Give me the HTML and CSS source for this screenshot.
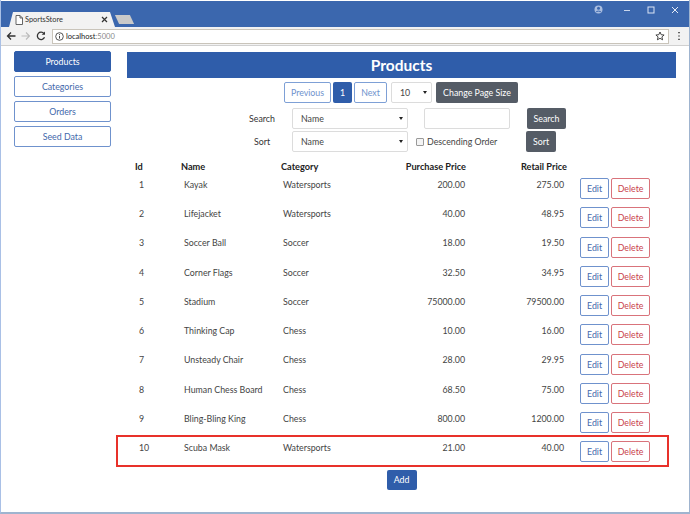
FILE: index.html
```html
<!DOCTYPE html>
<html lang="en">
<head>
    <meta charset="UTF-8">
    <meta name="viewport" content="width=device-width, initial-scale=1.0">
    <title>SportsStore</title>
    <link rel="stylesheet" href="styles.css">
</head>
<body>
    <div class="window">
        <div class="titlebar">
            <div class="tab">
                <svg class="tab-icon" width="8" height="10" viewBox="0 0 8 10"><path d="M1 .5h4l2.5 2.5v6.5H1z M5 .5V3h2.5" fill="#fff" stroke="#555" stroke-width=".9"/></svg>
                <span class="tab-title">SportsStore</span>
                <svg class="tab-close" width="7" height="7" viewBox="0 0 7 7"><path d="M1 1l5 5M6 1L1 6" stroke="#333" stroke-width="1.2"/></svg>
            </div>
            <div class="new-tab"></div>
            <div class="window-controls">
                <svg class="account" width="9" height="9" viewBox="0 0 9 9"><circle cx="4.5" cy="4.5" r="4" fill="#a9bde0"/><circle cx="4.5" cy="3.3" r="1.5" fill="#3b67ae"/><path d="M1.8 7.2c.7-1.4 4.7-1.4 5.4 0" stroke="#3b67ae" fill="none"/></svg>
                <svg width="8" height="8" viewBox="0 0 8 8"><path d="M1 4.5h6" stroke="#c9d6ec" stroke-width="1"/></svg>
                <svg width="8" height="8" viewBox="0 0 8 8"><rect x="1" y="1" width="6" height="6" fill="none" stroke="#dbe4f3" stroke-width="1"/></svg>
                <svg width="8" height="8" viewBox="0 0 8 8"><path d="M1 1l6 6M7 1L1 7" stroke="#e6ecf6" stroke-width="1"/></svg>
            </div>
        </div>
        <div class="toolbar">
            <svg width="10" height="10" viewBox="0 0 10 10"><path d="M9.5 5H1.5M5 1.5L1.5 5 5 8.5" fill="none" stroke="#333" stroke-width="1.3"/></svg>
            <svg width="10" height="10" viewBox="0 0 10 10"><path d="M.5 5h8M5 1.5L8.5 5 5 8.5" fill="none" stroke="#bbb" stroke-width="1.1"/></svg>
            <svg width="10" height="10" viewBox="0 0 10 10"><path d="M8.5 6.2A3.7 3.7 0 1 1 8 2.6" fill="none" stroke="#333" stroke-width="1.3"/><path d="M9 .5v3.3H5.7z" fill="#333"/></svg>
            <div class="address">
                <svg width="9" height="9" viewBox="0 0 9 9"><circle cx="4.5" cy="4.5" r="3.8" fill="none" stroke="#444" stroke-width=".9"/><path d="M4.5 4v2.6M4.5 2.2v1" stroke="#444" stroke-width="1"/></svg>
                <span class="host">localhost</span><span class="port">:5000</span>
                <svg class="star" width="10" height="10" viewBox="0 0 10 10"><path d="M5 1l1.2 2.7 2.9.3-2.2 1.9.7 2.9L5 7.3 2.4 8.8l.7-2.9L.9 4l2.9-.3z" fill="none" stroke="#333" stroke-width=".9"/></svg>
            </div>
            <svg class="menu" width="4" height="10" viewBox="0 0 4 10"><path d="M2 1v1.2M2 4.4v1.2M2 7.8V9" stroke="#333" stroke-width="1.5"/></svg>
        </div>

        <div class="page">
            <div class="sidebar">
                <a class="nav-btn active">Products</a>
                <a class="nav-btn">Categories</a>
                <a class="nav-btn">Orders</a>
                <a class="nav-btn">Seed Data</a>
            </div>
            <div class="main">
                <h1 class="heading">Products</h1>

                <div class="pager">
                    <button class="btn btn-outline pager-prev">Previous</button>
                    <button class="btn btn-primary pager-num">1</button>
                    <button class="btn btn-outline pager-next">Next</button>
                    <div class="select pager-size">10</div>
                    <button class="btn btn-dark pager-change">Change Page Size</button>
                </div>

                <div class="filter-row">
                    <span class="filter-label">Search</span>
                    <div class="select filter-select">Name</div>
                    <input class="filter-input" type="text">
                    <button class="btn btn-dark search-btn">Search</button>
                </div>
                <div class="filter-row sort-row">
                    <span class="filter-label">Sort</span>
                    <div class="select filter-select">Name</div>
                    <label class="check"><span class="check-box"></span>Descending Order</label>
                    <button class="btn btn-dark sort-btn">Sort</button>
                </div>

                <table class="products">
                    <thead>
                        <tr>
                            <th class="col-id">Id</th>
                            <th class="col-name">Name</th>
                            <th class="col-cat">Category</th>
                            <th class="col-price">Purchase Price</th>
                            <th class="col-retail">Retail Price</th>
                            <th></th>
                        </tr>
                    </thead>
                    <tbody>
                        <tr><td class="col-id">1</td><td class="col-name">Kayak</td><td class="col-cat">Watersports</td><td class="col-price">200.00</td><td class="col-retail">275.00</td><td class="col-actions"><button class="btn btn-edit">Edit</button><button class="btn btn-delete">Delete</button></td></tr>
                        <tr><td class="col-id">2</td><td class="col-name">Lifejacket</td><td class="col-cat">Watersports</td><td class="col-price">40.00</td><td class="col-retail">48.95</td><td class="col-actions"><button class="btn btn-edit">Edit</button><button class="btn btn-delete">Delete</button></td></tr>
                        <tr><td class="col-id">3</td><td class="col-name">Soccer Ball</td><td class="col-cat">Soccer</td><td class="col-price">18.00</td><td class="col-retail">19.50</td><td class="col-actions"><button class="btn btn-edit">Edit</button><button class="btn btn-delete">Delete</button></td></tr>
                        <tr><td class="col-id">4</td><td class="col-name">Corner Flags</td><td class="col-cat">Soccer</td><td class="col-price">32.50</td><td class="col-retail">34.95</td><td class="col-actions"><button class="btn btn-edit">Edit</button><button class="btn btn-delete">Delete</button></td></tr>
                        <tr><td class="col-id">5</td><td class="col-name">Stadium</td><td class="col-cat">Soccer</td><td class="col-price">75000.00</td><td class="col-retail">79500.00</td><td class="col-actions"><button class="btn btn-edit">Edit</button><button class="btn btn-delete">Delete</button></td></tr>
                        <tr><td class="col-id">6</td><td class="col-name">Thinking Cap</td><td class="col-cat">Chess</td><td class="col-price">10.00</td><td class="col-retail">16.00</td><td class="col-actions"><button class="btn btn-edit">Edit</button><button class="btn btn-delete">Delete</button></td></tr>
                        <tr><td class="col-id">7</td><td class="col-name">Unsteady Chair</td><td class="col-cat">Chess</td><td class="col-price">28.00</td><td class="col-retail">29.95</td><td class="col-actions"><button class="btn btn-edit">Edit</button><button class="btn btn-delete">Delete</button></td></tr>
                        <tr><td class="col-id">8</td><td class="col-name">Human Chess Board</td><td class="col-cat">Chess</td><td class="col-price">68.50</td><td class="col-retail">75.00</td><td class="col-actions"><button class="btn btn-edit">Edit</button><button class="btn btn-delete">Delete</button></td></tr>
                        <tr><td class="col-id">9</td><td class="col-name">Bling-Bling King</td><td class="col-cat">Chess</td><td class="col-price">800.00</td><td class="col-retail">1200.00</td><td class="col-actions"><button class="btn btn-edit">Edit</button><button class="btn btn-delete">Delete</button></td></tr>
                        <tr><td class="col-id">10</td><td class="col-name">Scuba Mask</td><td class="col-cat">Watersports</td><td class="col-price">21.00</td><td class="col-retail">40.00</td><td class="col-actions"><button class="btn btn-edit">Edit</button><button class="btn btn-delete">Delete</button></td></tr>
                    </tbody>
                </table>

                <div class="add-row">
                    <button class="btn btn-primary add-btn">Add</button>
                </div>
            </div>
        </div>

        <div class="highlight"></div>
    </div>
</body>
</html>
```

FILE: styles.css
```css
html, body {
    margin: 0;
    padding: 0;
}

body {
    font-family: Lato, "Open Sans", sans-serif;
    font-size: 8.8px;
    color: #333;
    background-color: #fff;
}

.window {
    position: relative;
    width: 690px;
    height: 514px;
    box-sizing: border-box;
    overflow: hidden;
    border-left: 1px solid #a9c0e6;
    border-right: 1px solid #9fb4cf;
    border-bottom: 2px solid #9fb4cf;
}

.titlebar {
    display: flex;
    align-items: flex-end;
    height: 26px;
    margin-top: 1px;
    margin-left: -1px;
    margin-right: -1px;
    padding-left: 9px;
    background-color: #3b67ae;
}

.tab {
    display: flex;
    align-items: center;
    width: 106px;
    height: 15px;
    box-sizing: border-box;
    padding: 0 7px 0 6px;
    background-color: #f2f2f2;
    clip-path: polygon(0 100%, 4px 0, 101px 0, 100% 100%);
}

.tab-icon {
    margin-right: 2px;
}

.tab-title {
    flex: 1;
    font-size: 7.4px;
    color: #333;
}

.new-tab {
    width: 15px;
    height: 9px;
    margin: 0 0 3px 2px;
    background-color: #c9c9c9;
    transform: skewX(25deg);
}

.window-controls {
    display: flex;
    align-items: center;
    gap: 16px;
    margin-left: auto;
    align-self: flex-start;
    padding: 4px 11px 0 0;
}

.account {
    margin-right: 4px;
}

.toolbar {
    display: flex;
    align-items: center;
    gap: 5px;
    height: 19px;
    box-sizing: border-box;
    padding: 0 8px 0 5px;
    background-color: #f2f2f2;
    border-bottom: 1px solid #d0d0d0;
}

.address {
    display: flex;
    align-items: center;
    flex: 1;
    height: 15px;
    margin-left: 1px;
    box-sizing: border-box;
    padding-left: 2px;
    padding-right: 3px;
    background-color: #fff;
    border: 1px solid #c9c4ba;
    font-size: 7.5px;
}

.address svg {
    margin-right: 2px;
}

.host {
    color: #222;
}

.port {
    color: #888;
}

.address .star {
    margin-left: auto;
    margin-right: 0;
}

.menu {
    margin-left: 3px;
}

.page {
    display: flex;
    padding: 5px 13px 0 13px;
}

.sidebar {
    display: flex;
    flex-direction: column;
    gap: 4px;
    flex: none;
    width: 97px;
    margin-right: 16px;
}

.nav-btn {
    display: block;
    height: 21px;
    box-sizing: border-box;
    line-height: 19px;
    text-align: center;
    border: 1px solid #6f92cd;
    border-radius: 2px;
    color: #3f68ab;
}

.nav-btn.active {
    background-color: #2f5daa;
    border-color: #2f5daa;
    color: #fff;
}

.main {
    flex: 1;
    min-width: 0;
}

.heading {
    height: 26px;
    margin: 1px 0 4px 0;
    line-height: 27px;
    text-align: center;
    font-size: 15.5px;
    font-weight: 700;
    color: #fff;
    background-color: #2f5daa;
}

.btn {
    display: block;
    height: 21px;
    box-sizing: border-box;
    padding: 0;
    font-family: inherit;
    font-size: 8.8px;
    border-radius: 2px;
    border: 1px solid transparent;
}

.btn-outline {
    background-color: #fff;
    border-color: #7ea0d6;
    color: #6f92cd;
}

.btn-primary {
    background-color: #2f5daa;
    color: #fff;
}

.btn-dark {
    background-color: #555c66;
    color: #fff;
}

.pager {
    display: flex;
    height: 21px;
    padding-left: 157px;
}

.pager-prev {
    width: 47px;
}

.pager-num {
    width: 19px;
    margin-left: 2px;
}

.pager-next {
    width: 33px;
    margin-left: 2px;
}

.select {
    position: relative;
    height: 21px;
    box-sizing: border-box;
    line-height: 19px;
    padding-left: 8px;
    background-color: #fff;
    border: 1px solid #dcdcdc;
    border-radius: 2px;
    color: #444;
}

.select::after {
    content: "";
    position: absolute;
    right: 4px;
    top: 8px;
    border-top: 3px solid #222;
    border-left: 2px solid transparent;
    border-right: 2px solid transparent;
}

.pager-size {
    width: 41px;
    margin-left: 4px;
}

.pager-change {
    width: 82px;
    margin-left: 4px;
}

.filter-row {
    display: flex;
    align-items: center;
    height: 21px;
    margin-top: 5px;
}

.sort-row {
    margin-top: 2px;
}

.filter-label {
    width: 165px;
    box-sizing: border-box;
    padding-left: 105px;
    text-align: center;
    color: #333;
}

.filter-select {
    width: 116px;
    padding-left: 8px;
}

.filter-input {
    width: 86px;
    height: 21px;
    box-sizing: border-box;
    margin: 0 0 0 16px;
    border: 1px solid #dcdcdc;
    border-radius: 2px;
}

.search-btn {
    width: 39px;
    margin-left: 17px;
}

.check {
    display: flex;
    align-items: center;
    width: 110px;
    margin-left: 8px;
    color: #444;
}

.check-box {
    width: 6px;
    height: 6px;
    margin-right: 3px;
    border: 1px solid #999;
    border-radius: 1px;
    background-color: #f4f4f4;
}

.sort-btn {
    width: 30px;
}

.products {
    border-collapse: collapse;
    table-layout: fixed;
    width: 523px;
    margin-top: 7px;
}

.products th {
    height: 15px;
    padding: 0;
    font-size: 9.2px;
    font-weight: 700;
    color: #222;
    text-align: left;
}

.products tbody tr {
    height: 29.25px;
}

.products td {
    padding: 3.9px 0 0 0;
    vertical-align: top;
    line-height: 13px;
    color: #444;
}

.col-id {
    width: 46px;
}

.products th.col-id {
    padding-left: 8px;
}

.products td.col-id {
    padding-left: 12px;
}

.col-name {
    width: 100px;
}

.products td.col-name {
    padding-left: 3px;
}

.col-cat {
    width: 90px;
}

.products td.col-cat {
    padding-left: 2px;
}

.products .col-price {
    width: 95px;
    text-align: right;
}

.products td.col-price {
    padding-right: 1px;
}

.products .col-retail {
    width: 101px;
    text-align: right;
}

.products td.col-retail {
    padding-right: 3px;
}

.products td.col-actions {
    display: flex;
    gap: 2px;
    padding: 4px 0 0 13px;
    box-sizing: border-box;
}

.btn-edit {
    width: 30px;
    background-color: #fff;
    border-color: #6f92cd;
    color: #3f68ab;
}

.btn-delete {
    width: 40px;
    background-color: #fff;
    border-color: #d9737b;
    color: #c9424c;
}

.add-row {
    display: flex;
    justify-content: center;
    margin-top: 3px;
}

.add-btn {
    width: 30px;
    height: 20px;
}

/* red annotation drawn over the last row */
.highlight {
    position: absolute;
    left: 115px;
    top: 435px;
    width: 549px;
    height: 28px;
    border: 2px solid #e8312a;
}
```
